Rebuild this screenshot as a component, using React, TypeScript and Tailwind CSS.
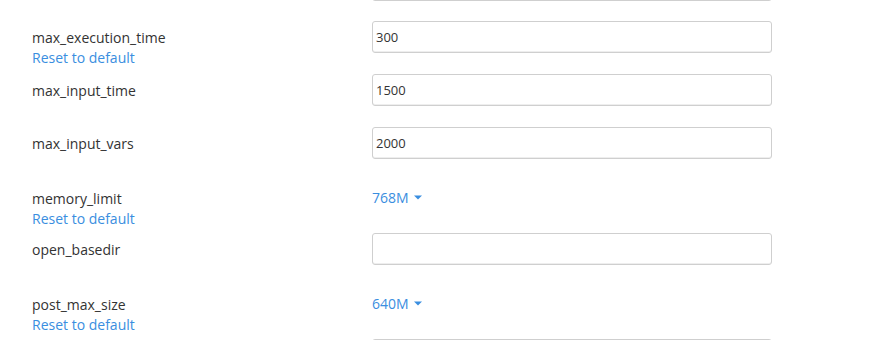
const rows = [
  { name: "max_execution_time", kind: "input", value: "300", reset: true },
  { name: "max_input_time", kind: "input", value: "1500", reset: false },
  { name: "max_input_vars", kind: "input", value: "2000", reset: false },
  { name: "memory_limit", kind: "select", value: "768M", reset: true },
  { name: "open_basedir", kind: "input", value: "", reset: false },
  { name: "post_max_size", kind: "select", value: "640M", reset: true },
]

function Caret() {
  return (
    <svg width="8" height="5" viewBox="0 0 8 5" className="ml-[5px] mt-[1px]">
      <path d="M0 0.5 H8 L4 4.5 Z" fill="#3a8ee0" />
    </svg>
  )
}

function Field({ kind, value }: { kind: string; value: string }) {
  if (kind === "select") {
    return (
      <div className="h-8 pt-[2px] flex items-center text-[14px] text-[#3a8ee0] cursor-pointer">
        {value}
        <Caret />
      </div>
    )
  }
  return (
    <input
      readOnly
      value={value}
      className="w-[400px] h-8 px-[3px] border border-[#cfcfcf] rounded-[3px] text-[13px] text-[#333] bg-white outline-none shadow-[inset_0_-1px_0_#eee]"
    />
  )
}

export default function App() {
  return (
    <div className="w-[886px] h-[340px] overflow-hidden bg-white font-['Open_Sans',sans-serif] pl-8">
      {/* tail of the previous field */}
      <div className="flex -mt-[31px] mb-[20px]">
        <div className="w-[340px]" />
        <div className="w-[400px] h-8 border border-[#cfcfcf] rounded-[3px]" />
      </div>

      {rows.map((row) => (
        <div key={row.name} className="flex items-start h-8 mb-[21px]">
          <div
            className={
              row.kind === "select"
                ? "w-[340px] pt-[9px] text-[14px] leading-5"
                : "w-[340px] pt-[7px] text-[14px] leading-5"
            }
          >
            <div className="text-[#333]">{row.name}</div>
            {row.reset && <a className="text-[#3a8ee0] cursor-pointer">Reset to default</a>}
          </div>
          <Field kind={row.kind} value={row.value} />
        </div>
      ))}

      <div className="flex">
        <div className="w-[340px]" />
        <div className="w-[400px] h-8 border border-[#cfcfcf] rounded-[3px]" />
      </div>
    </div>
  )
}
